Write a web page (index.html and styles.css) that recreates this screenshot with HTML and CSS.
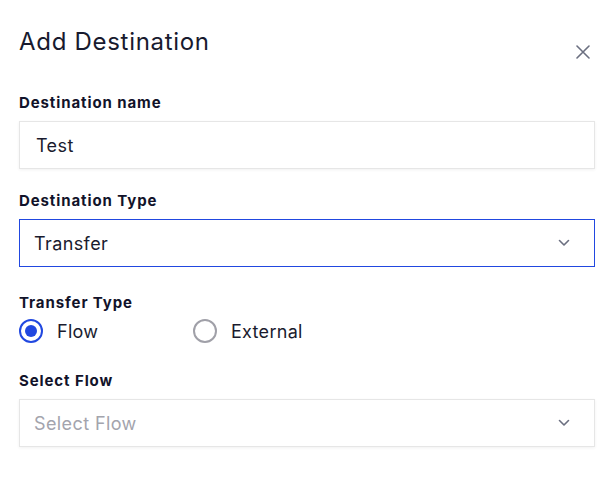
FILE: index.html
```html
<!DOCTYPE html>
<html>
<head>
<meta charset="utf-8">
<link rel="stylesheet" href="styles.css">
</head>
<body>
<div class="dialog">
  <div class="header">
    <h1 class="title">Add Destination</h1>
    <button class="close" aria-label="Close">
      <svg width="14" height="14" viewBox="0 0 14 14"><path d="M1 1L13 13M13 1L1 13" stroke="#6b6f80" stroke-width="1.6" stroke-linecap="round"/></svg>
    </button>
  </div>
  <div class="field first">
    <label class="label">Destination name</label>
    <div class="input">Test</div>
  </div>
  <div class="field">
    <label class="label">Destination Type</label>
    <div class="input select active">
      <span>Transfer</span>
      <svg class="chev" width="12" height="8" viewBox="0 0 12 8"><path d="M1.5 1.5L6 6L10.5 1.5" fill="none" stroke="#6b6f80" stroke-width="1.6" stroke-linecap="round" stroke-linejoin="round"/></svg>
    </div>
  </div>
  <div class="field radios-field">
    <label class="label">Transfer Type</label>
    <div class="radios">
      <div class="radio checked"><span class="dot"></span>Flow</div>
      <div class="radio"><span class="dot"></span>External</div>
    </div>
  </div>
  <div class="field">
    <label class="label">Select Flow</label>
    <div class="input select">
      <span class="placeholder">Select Flow</span>
      <svg class="chev" width="12" height="8" viewBox="0 0 12 8"><path d="M1.5 1.5L6 6L10.5 1.5" fill="none" stroke="#6b6f80" stroke-width="1.6" stroke-linecap="round" stroke-linejoin="round"/></svg>
    </div>
  </div>
</div>
</body>
</html>
```
FILE: styles.css
```css
html, body { margin: 0; padding: 0; background: #fff; }
body { font-family: "Inter", "Noto Sans", sans-serif; color: #14142b; }
.dialog { padding: 24px 13px 0 19px; width: 576px; }
.header { display: flex; justify-content: space-between; align-items: flex-start; height: 68px; }
.title { margin: 0; font-size: 24px; font-weight: 400; line-height: 36px; letter-spacing: 0.7px; color: #181a2e; }
.close { background: none; border: 0; padding: 0; margin: 21px 5px 0 0; width: 14px; height: 14px; display: flex; }
.field { display: flex; flex-direction: column; }
.label { font-size: 15px; font-weight: 700; line-height: 20px; letter-spacing: 0.9px; color: #12132a; padding-top: 1px; margin-bottom: 8px; }
.input { height: 46px; border: 1px solid #e6e6e6; box-shadow: 0 1px 3px rgba(0,0,0,0.06); box-sizing: content-box; display: flex; align-items: center; padding: 0 16px; font-size: 18px; letter-spacing: 0.4px; color: #1a1b2e; margin-bottom: 25px; }
.first .input { margin-bottom: 21px; }
.select { justify-content: space-between; padding-left: 14px; padding-right: 24px; }
.active { border-color: #2148e0; box-shadow: none; }
.placeholder { color: #a3a4ad; }
.radios-field .label { margin-bottom: 2px; }
.radios { display: flex; margin-bottom: 23px; }
.radio { display: flex; align-items: center; font-size: 18px; letter-spacing: 0.3px; color: #1a1b2e; height: 32px; width: 174px; }
.dot { width: 20px; height: 20px; border: 2px solid #a0a0a8; border-radius: 50%; margin-right: 14px; position: relative; }
.checked .dot { border-color: #2148e0; }
.checked .dot::after { content: ""; position: absolute; left: 4px; top: 4px; width: 12px; height: 12px; border-radius: 50%; background: #2148e0; }
```
